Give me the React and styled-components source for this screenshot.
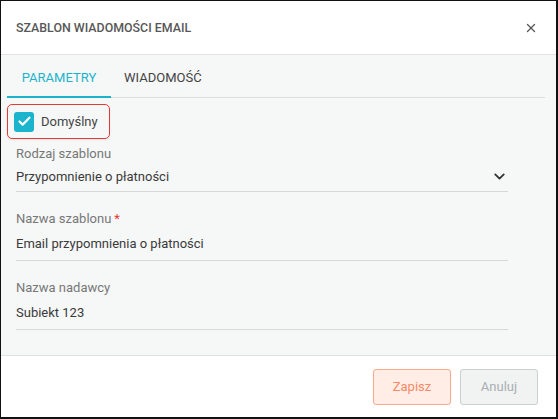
import React from "react";
import styled, { createGlobalStyle } from "styled-components";
import { ChevronDown, X, Check } from "lucide-react";

const Global = createGlobalStyle`
  html, body { margin: 0; padding: 0; background: #fff; }
  body { font-family: Roboto, "Noto Sans", Arial, sans-serif; }
  * { box-sizing: border-box; }
`;

const Dialog = styled.div`
  width: 558px;
  height: 419px;
  display: flex;
  flex-direction: column;
  border-style: solid;
  border-color: #111;
  border-width: 1px 2px 2px 1px;
  background: #fff;
  overflow: hidden;
`;

const Header = styled.div`
  height: 54px;
  flex: none;
  display: flex;
  align-items: center;
  justify-content: space-between;
  padding: 0 18px 0 15px;
  border-bottom: 1px solid #e2e4e4;
`;

const Title = styled.div`
  font-size: 12.4px;
  font-weight: 500;
  color: #575757;
`;

const CloseBtn = styled.button`
  border: 0;
  background: none;
  padding: 0;
  display: flex;
  color: #555;
  cursor: pointer;
`;

const Body = styled.div`
  flex: 1;
  background: #f6f7f7;
  display: flex;
  flex-direction: column;
`;

const Tabs = styled.div`
  display: flex;
  margin: 0 11px 0 6px;
  border-bottom: 1px solid #dcdfe0;
  height: 43px;
`;

const Tab = styled.div`
  padding: 0 13px;
  min-width: ${(p) => (p.$w ? p.$w + "px" : "auto")};
  display: flex;
  align-items: center;
  justify-content: center;
  font-size: 13px;
  color: ${(p) => (p.$active ? "#1db4cb" : "#444")};
  border-bottom: 2px solid ${(p) => (p.$active ? "#1db4cb" : "transparent")};
  margin-bottom: -1px;
  padding-top: 4px;
`;

const CheckWrap = styled.label`
  margin: 6px 0 0 6px;
  width: 103px;
  height: 35px;
  border: 1.5px solid #e53935;
  border-radius: 5px;
  display: flex;
  align-items: center;
  gap: 7px;
  padding-left: 6px;
  box-shadow: 0 1px 2px rgba(0, 0, 0, 0.08);
`;

const Box = styled.span`
  width: 20px;
  height: 20px;
  border-radius: 3px;
  background: #1ab4cc;
  display: flex;
  align-items: center;
  justify-content: center;
  color: #fff;
`;

const CheckLabel = styled.span`
  font-size: 13px;
  color: #444;
`;

const Fields = styled.div`
  display: flex;
  flex-direction: column;
  gap: 18px;
  margin: 6px 48px 0 15px;
`;

const Field = styled.div`
  display: flex;
  flex-direction: column;
`;

const Label = styled.div`
  font-size: 13px;
  line-height: 18px;
  color: #777;
`;

const Star = styled.span`
  color: #e53935;
  margin-left: 3px;
`;

const InputRow = styled.div`
  height: ${(p) => (p.$select ? 29 : 33)}px;
  display: flex;
  align-items: center;
  justify-content: space-between;
  border-bottom: 1px solid #d6d9da;
  font-size: 13px;
  color: #3a3a3a;
  padding-bottom: 1px;
`;

const Footer = styled.div`
  height: 62px;
  flex: none;
  border-top: 1px solid #e0e2e2;
  display: flex;
  align-items: center;
  justify-content: flex-end;
  gap: 9px;
  padding-right: 18px;
`;

const Button = styled.button`
  width: 78px;
  height: 36px;
  border-radius: 3px;
  font-family: Roboto, sans-serif;
  font-size: 13px;
  border: 1px solid ${(p) => (p.$primary ? "#f8a88c" : "#c9d0d2")};
  background: ${(p) => (p.$primary ? "#ffede6" : "#f1f2f2")};
  color: ${(p) => (p.$primary ? "#f58a68" : "#a8b0b3")};
`;

export default function App() {
  return (
    <>
      <Global />
      <Dialog>
        <Header>
          <Title>SZABLON WIADOMOŚCI EMAIL</Title>
          <CloseBtn aria-label="close">
            <X size={14} strokeWidth={2.2} />
          </CloseBtn>
        </Header>
        <Body>
          <Tabs>
            <Tab $active $w={104}>PARAMETRY</Tab>
            <Tab>WIADOMOŚĆ</Tab>
          </Tabs>
          <CheckWrap>
            <Box>
              <Check size={15} strokeWidth={3.5} />
            </Box>
            <CheckLabel>Domyślny</CheckLabel>
          </CheckWrap>
          <Fields>
            <Field>
              <Label>Rodzaj szablonu</Label>
              <InputRow $select>
                <span>Przypomnienie o płatności</span>
                <ChevronDown size={17} strokeWidth={2.6} color="#333" />
              </InputRow>
            </Field>
            <Field>
              <Label>
                Nazwa szablonu<Star>*</Star>
              </Label>
              <InputRow>Email przypomnienia o płatności</InputRow>
            </Field>
            <Field>
              <Label>Nazwa nadawcy</Label>
              <InputRow>Subiekt 123</InputRow>
            </Field>
          </Fields>
        </Body>
        <Footer>
          <Button $primary>Zapisz</Button>
          <Button>Anuluj</Button>
        </Footer>
      </Dialog>
    </>
  );
}
